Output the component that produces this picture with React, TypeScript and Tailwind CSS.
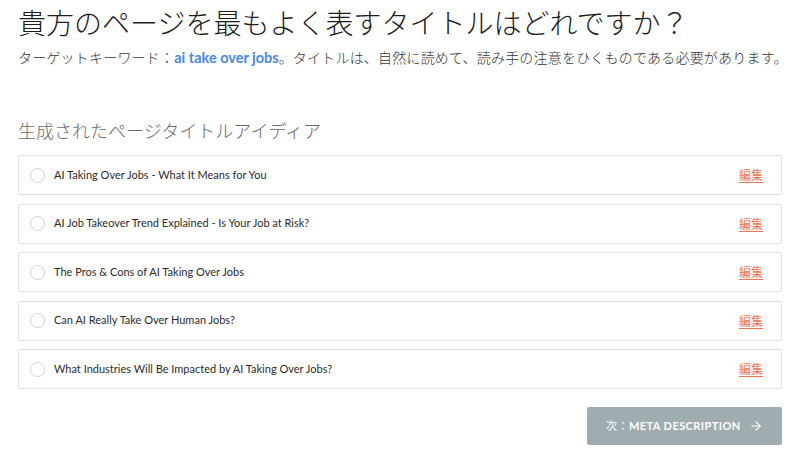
import { ArrowRight } from "lucide-react";

const titles = [
  "AI Taking Over Jobs - What It Means for You",
  "AI Job Takeover Trend Explained - Is Your Job at Risk?",
  "The Pros & Cons of AI Taking Over Jobs",
  "Can AI Really Take Over Human Jobs?",
  "What Industries Will Be Impacted by AI Taking Over Jobs?",
];

const jp = { fontFamily: '"Noto Sans CJK JP", "Noto Sans", sans-serif' };
const latin = { fontFamily: 'Lato, "Noto Sans CJK JP", sans-serif' };

export default function App() {
  return (
    <div className="w-[800px] h-[468px] bg-white px-[18px] overflow-hidden" style={jp}>
      <h1 className="pt-[4px] text-[28px] leading-[36px] text-[#1c1c1c] font-light">
        貴方のページを最もよく表すタイトルはどれですか？
      </h1>
      <p className="mt-[7px] text-[14px] leading-[20px] text-[#333] whitespace-nowrap font-light tracking-[0.2px]">
        ターゲットキーワード：
        <span className="font-bold text-[#4a86e8] text-[14.5px] tracking-normal" style={latin}>
          ai take over jobs
        </span>
        。タイトルは、自然に読めて、読み手の注意をひくものである必要があります。
      </p>

      <h2 className="mt-[49px] text-[18px] leading-[26px] text-[#6b6b6b] font-light">
        生成されたページタイトルアイディア
      </h2>

      <div className="mt-[12px] flex flex-col gap-[8.5px]">
        {titles.map((t) => (
          <div
            key={t}
            className="h-[40px] border border-[#dfe3e5] rounded-[2px] flex items-center pl-[11px] pr-[18px]"
          >
            <span className="w-[15px] h-[15px] rounded-full border border-[#d0d4d7] shrink-0" />
            <span className="ml-[9px] text-[11px] text-[#2b2b2b] flex-1" style={latin}>
              {t}
            </span>
            <a className="text-[12px] text-[#f0735a] underline underline-offset-2">編集</a>
          </div>
        ))}
      </div>

      <div className="mt-[18px] flex justify-end">
        <button className="w-[195px] h-[38px] bg-[#9fadb0] rounded-[2px] flex items-center justify-between px-[19px] text-white">
          <span className="text-[11px] tracking-[0.04em] font-bold" style={latin}>
            <span className="font-normal" style={jp}>次：</span>META DESCRIPTION
          </span>
          <ArrowRight size={14} strokeWidth={2} />
        </button>
      </div>
    </div>
  );
}
